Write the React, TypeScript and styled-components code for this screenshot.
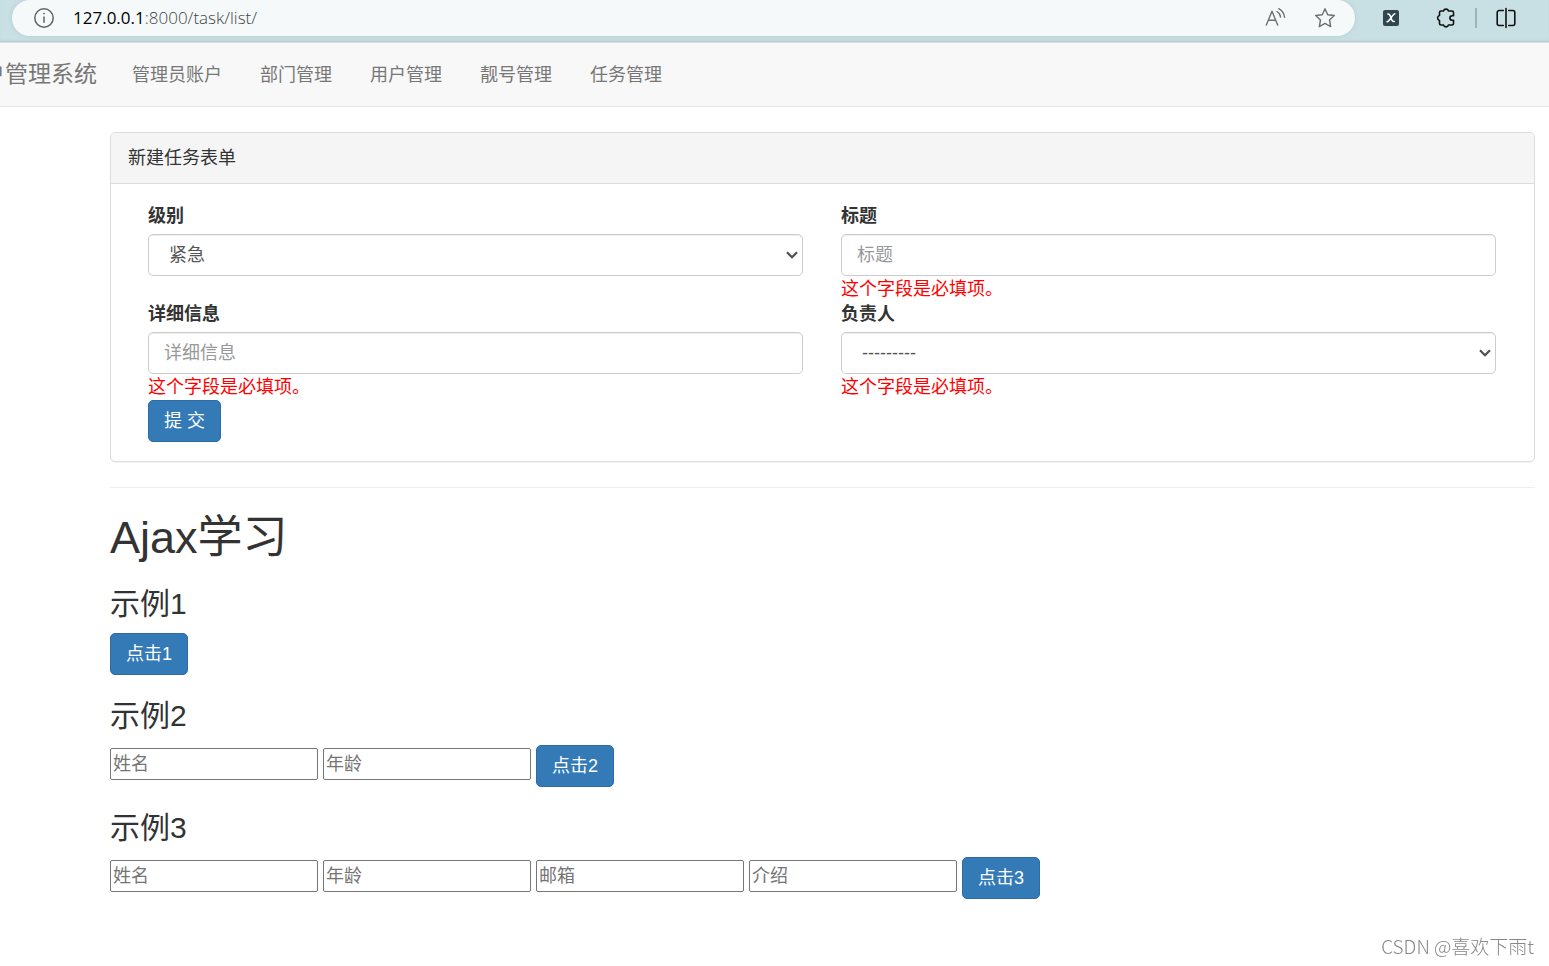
import React from "react";
import styled, { createGlobalStyle } from "styled-components";

const GlobalStyle = createGlobalStyle`
  *, *::before, *::after { box-sizing: border-box; }
  body {
    margin: 0;
    background: #fff;
    color: #333;
    font-family: "Liberation Sans", "Noto Sans CJK SC", sans-serif;
    font-size: 18px;
    line-height: 25px;
  }
  input, select, button { font-family: inherit; font-size: inherit; }
`;

const BrowserBar = styled.header`
  display: flex;
  align-items: flex-start;
  height: 43px;
  padding-left: 12px;
  background: #c8dfe3;
  border-bottom: 1px solid #dcdfe0;
  box-shadow: inset 0 -2px 2px -1px #b3c9cd;
`;

const AddressBar = styled.div`
  flex: 1;
  display: flex;
  align-items: center;
  height: 36px;
  padding: 0 19px 0 21px;
  border-radius: 18px;
  background: #f5f9fa;
  box-shadow: 0 0 4px #b4cdd1;
`;

const Url = styled.span`
  flex: 1;
  margin-left: 18px;
  padding-bottom: 2px;
  font-family: "Open Sans", sans-serif;
  font-size: 17px;
  font-weight: 300;
  color: #444;
`;

const Host = styled.span`
  font-weight: 400;
  color: #000;
`;

const IconButton = styled.button`
  display: flex;
  padding: 0;
  border: 0;
  background: none;
  color: inherit;
`;

const AddressActions = styled.div`
  display: flex;
  align-items: center;
  gap: 28px;
  color: #6c7072;
`;

const Extensions = styled.div`
  display: flex;
  align-items: center;
  height: 36px;
  gap: 18px;
  padding: 0 32px 0 28px;
  color: #111;
`;

const ExtensionSlot = styled.div`
  margin-right: 18px;
`;

const Divider = styled.span`
  width: 2px;
  height: 20px;
  background: #9fb2b6;
`;

const Navbar = styled.nav`
  display: flex;
  align-items: center;
  height: 64px;
  background: #f8f8f8;
  border-bottom: 1px solid #e7e7e7;
  color: #777;
`;

const Brand = styled.a`
  display: flex;
  justify-content: flex-end;
  width: 97px;
  padding-bottom: 2px;
  overflow: hidden;
  white-space: nowrap;
  color: inherit;
  text-decoration: none;
  font-size: 23px;
  line-height: 32px;
`;

const NavList = styled.ul`
  display: flex;
  gap: 38px;
  margin: 0 0 0 35px;
  padding: 2px 0 0;
  list-style: none;
`;

const NavLink = styled.a`
  color: inherit;
  text-decoration: none;
`;

const Container = styled.main`
  padding: 25px 14px 40px 110px;
`;

const Panel = styled.section`
  border: 1px solid #ddd;
  border-radius: 5px;
  box-shadow: 0 1px 1px rgba(0, 0, 0, 0.05);
`;

const PanelHeading = styled.div`
  padding: 13px 17px 12px;
  border-bottom: 1px solid #ddd;
  border-radius: 4px 4px 0 0;
  background: #f5f5f5;
`;

const TaskForm = styled.form`
  padding: 20px 38px 19px 37px;
`;

const FieldGrid = styled.div`
  display: grid;
  grid-template-columns: 1fr 1fr;
  column-gap: 38px;
`;

const Field = styled.div`
  display: flex;
  flex-direction: column;
`;

const Label = styled.label`
  margin-bottom: 5px;
  font-weight: 700;
`;

const controlStyle = `
  width: 100%;
  height: 42px;
  padding: 7px 15px;
  border: 1px solid #ccc;
  border-radius: 5px;
  background-color: #fff;
  box-shadow: inset 0 1px 1px rgba(0, 0, 0, 0.075);
  color: #555;
`;

const TextControl = styled.input`
  ${controlStyle}
  &::placeholder { color: #999; }
`;

const SelectControl = styled.select`
  ${controlStyle}
  appearance: none;
  padding-left: 20px;
  background-image: url("data:image/svg+xml,%3Csvg xmlns='http://www.w3.org/2000/svg' width='12' height='8' fill='none' stroke='%23505050' stroke-width='2.2'%3E%3Cpath d='M1 1.300 6 6.300 11 1.300'/%3E%3C/svg%3E");
  background-repeat: no-repeat;
  background-position: right 4px center;
`;

const FieldError = styled.span`
  color: #f00;
  line-height: 26px;
`;

const Button = styled.button`
  height: 42px;
  padding: 1px 15px 0;
  border: 1px solid #2e6da4;
  border-radius: 5px;
  background: #337ab7;
  color: #fff;
  line-height: 25px;
`;

const Rule = styled.hr`
  margin: 25px 0;
  border: 0;
  border-top: 1px solid #eee;
`;

const Title = styled.h1`
  margin: 0;
  font-size: 45px;
  font-weight: 400;
  line-height: 50px;
`;

const ExampleTitle = styled.h3`
  margin: 25px 0 13px;
  font-size: 30px;
  font-weight: 400;
  line-height: 32px;
`;

const ExampleRow = styled.div`
  display: flex;
  align-items: center;
  gap: 5px;
`;

const PlainInput = styled.input`
  width: 208px;
  height: 32px;
  margin: 0 0 4px;
  padding: 1px 2px;
  border: 1px solid #767676;
  border-radius: 2px;
  &::placeholder { color: #757575; }
`;

const Watermark = styled.div`
  position: fixed;
  right: 15px;
  bottom: 8px;
  color: #888;
  font-family: "Noto Sans CJK SC", sans-serif;
  font-size: 19px;
  font-weight: 300;
`;

const navItems = ["管理员账户", "部门管理", "用户管理", "靓号管理", "任务管理"];

type FieldSpec = {
  id: string;
  label: string;
  option?: string;
  error?: string;
};

const fields: FieldSpec[] = [
  { id: "level", label: "级别", option: "紧急" },
  { id: "title", label: "标题", error: "这个字段是必填项。" },
  { id: "detail", label: "详细信息", error: "这个字段是必填项。" },
  { id: "user", label: "负责人", option: "---------", error: "这个字段是必填项。" },
];

const examples = [
  { title: "示例1", inputs: [], button: "点击1" },
  { title: "示例2", inputs: ["姓名", "年龄"], button: "点击2" },
  { title: "示例3", inputs: ["姓名", "年龄", "邮箱", "介绍"], button: "点击3" },
];

const InfoIcon = () => (
  <svg width="22" height="22" viewBox="0 0 22 22" fill="none" stroke="#5f6567" strokeWidth="1.5">
    <circle cx="11" cy="11" r="9.2" />
    <path d="M11 9.5v6.2" />
    <circle cx="11" cy="6.6" r="0.5" fill="#5f6567" strokeWidth="1" />
  </svg>
);

const ReadAloudIcon = () => (
  <svg width="22" height="22" viewBox="0 0 22 22" fill="none" stroke="currentColor" strokeWidth="1.4" strokeLinecap="round" strokeLinejoin="round">
    <path d="M2.300 18 8 4.200 13.700 18M4.200 13.300h7.600" />
    <path d="M13 4.500c2 1.200 3.300 3 3.500 5.500M14.800 1.700c3.200 1.800 5.300 4.800 5.700 8.600" />
  </svg>
);

const StarIcon = () => (
  <svg width="22" height="22" viewBox="0 0 22 22" fill="none" stroke="currentColor" strokeWidth="1.4" strokeLinejoin="round">
    <path d="M11 1.800 13.700 7.700 20.300 8.500 15.500 13 16.700 19.600 11 16.400 5.300 19.600 6.500 13 1.700 8.500 8.300 7.700Z" />
  </svg>
);

const ExtensionX = () => (
  <svg width="16" height="16" viewBox="0 0 16 16">
    <rect width="16" height="16" rx="2" fill="#31464f" />
    <path d="M4.800 4c1.800-.3 2.300.8 3.100 3.500.8 3 1.400 4.500 3.300 4M11.800 3.800C9.500 4.300 6.500 11.500 4.100 11.800" fill="none" stroke="#fff" strokeWidth="1.5" strokeLinecap="round" />
  </svg>
);

const PuzzleIcon = () => (
  <svg width="22" height="22" viewBox="0 0 22 22" fill="none" stroke="currentColor" strokeWidth="1.600" strokeLinejoin="round">
    <path d="M6 4h2.500a2.600 2.600 0 0 1 5 0H17a1.500 1.500 0 0 1 1.500 1.500V8.700h-1.300a2.300 2.300 0 0 0 0 4.600h1.300v3.200A1.500 1.500 0 0 1 17 18h-3.500a2.600 2.600 0 0 1-5 0H6a1.500 1.500 0 0 1-1.500-1.500v-3a2.600 2.600 0 0 1 0-5V5.500A1.500 1.500 0 0 1 6 4Z" />
  </svg>
);

const SplitIcon = () => (
  <svg width="22" height="22" viewBox="0 0 22 22" fill="none" stroke="currentColor" strokeWidth="1.600" strokeLinecap="round">
    <path d="M8.300 3.500H4.200a2 2 0 0 0-2 2v11a2 2 0 0 0 2 2h4.100M13.700 3.500h4.100a2 2 0 0 1 2 2v11a2 2 0 0 1-2 2h-4.100M11 1.500v19" />
  </svg>
);

export default function App() {
  return (
    <>
      <GlobalStyle />
      <BrowserBar>
        <AddressBar>
          <InfoIcon />
          <Url>
            <Host>127.0.0.1</Host>:8000/task/list/
          </Url>
          <AddressActions>
            <IconButton aria-label="朗读"><ReadAloudIcon /></IconButton>
            <IconButton aria-label="收藏"><StarIcon /></IconButton>
          </AddressActions>
        </AddressBar>
        <Extensions>
          <ExtensionSlot>
            <IconButton aria-label="扩展"><ExtensionX /></IconButton>
          </ExtensionSlot>
          <IconButton aria-label="扩展管理"><PuzzleIcon /></IconButton>
          <Divider />
          <IconButton aria-label="分屏"><SplitIcon /></IconButton>
        </Extensions>
      </BrowserBar>

      <Navbar>
        <Brand href="#">用户管理系统</Brand>
        <NavList>
          {navItems.map((item) => (
            <li key={item}><NavLink href="#">{item}</NavLink></li>
          ))}
        </NavList>
      </Navbar>

      <Container>
        <Panel>
          <PanelHeading>新建任务表单</PanelHeading>
          <TaskForm noValidate onSubmit={(e) => e.preventDefault()}>
            <FieldGrid>
              {fields.map((f) => (
                <Field key={f.id}>
                  <Label htmlFor={f.id}>{f.label}</Label>
                  {f.option ? (
                    <SelectControl id={f.id}><option>{f.option}</option></SelectControl>
                  ) : (
                    <TextControl id={f.id} type="text" placeholder={f.label} />
                  )}
                  {f.error && <FieldError>{f.error}</FieldError>}
                </Field>
              ))}
            </FieldGrid>
            <Button type="submit">提 交</Button>
          </TaskForm>
        </Panel>
        <Rule />
        <Title>Ajax学习</Title>
        {examples.map((ex) => (
          <section key={ex.title}>
            <ExampleTitle>{ex.title}</ExampleTitle>
            <ExampleRow>
              {ex.inputs.map((name) => (
                <PlainInput key={name} type="text" placeholder={name} aria-label={name} />
              ))}
              <Button type="button">{ex.button}</Button>
            </ExampleRow>
          </section>
        ))}
      </Container>
      <Watermark>CSDN @喜欢下雨t</Watermark>
    </>
  );
}
